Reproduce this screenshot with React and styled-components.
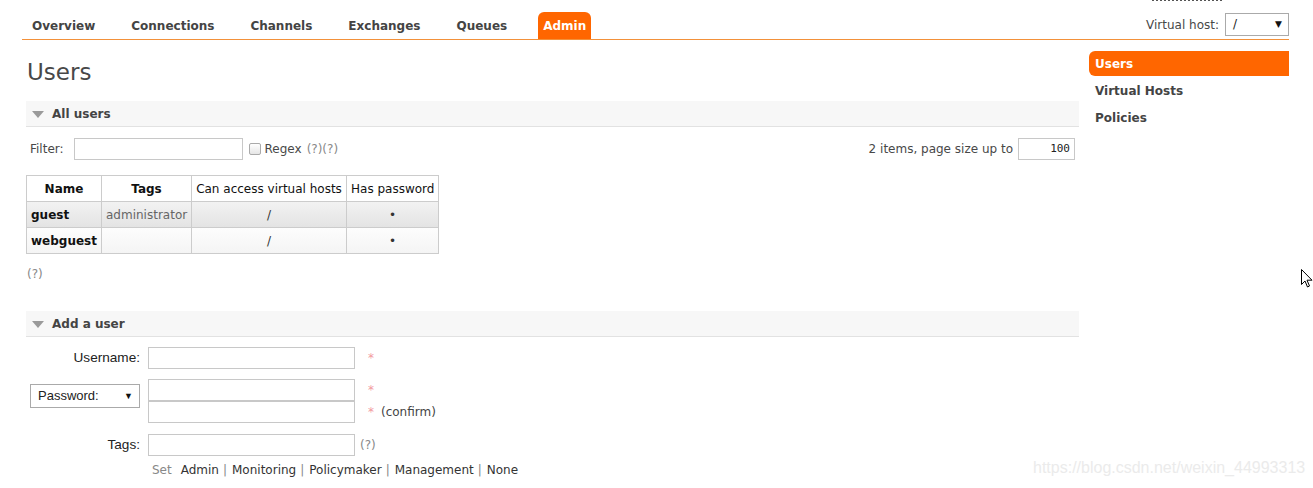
import React from "react";
import styled, { createGlobalStyle } from "styled-components";

const Global = createGlobalStyle`
  html, body { margin: 0; padding: 0; background: #fff; }
  body {
    font-family: "DejaVu Sans", Verdana, sans-serif;
    font-size: 12px;
    color: #484848;
  }
  * { box-sizing: border-box; }
`;

const Page = styled.div`
  position: relative;
  width: 1313px;
  height: 488px;
  overflow: hidden;
`;

const Header = styled.div`
  display: flex;
  justify-content: space-between;
  align-items: flex-end;
  margin: 0 24px 0 22px;
  height: 40px;
  border-bottom: 1px solid #f3913a;
`;

const Tabs = styled.ul`
  display: flex;
  gap: 26px;
  list-style: none;
  margin: 0;
  padding: 0 0 0 5px;
`;

const Tab = styled.li`
  height: 27px;
  line-height: 28px;
  padding: 0 5px;
  font-weight: bold;
  font-size: 12px;
  color: ${(p) => (p.$active ? "#fff" : "#444")};
  background: ${(p) => (p.$active ? "#ff6600" : "transparent")};
  border-radius: 6px 6px 0 0;
`;

const HeaderRight = styled.div`
  display: flex;
  flex-direction: column;
  align-items: flex-end;
  height: 40px;
`;

const CutLine = styled.div`
  height: 2px;
  width: 70px;
  margin-right: 67px;
  border-bottom: 2px dotted #555;
`;

const VhostRow = styled.div`
  display: flex;
  align-items: center;
  gap: 6px;
  margin-top: auto;
  margin-bottom: 3px;
`;

const SelectBox = styled.div`
  position: relative;
  width: ${(p) => p.$w}px;
  height: ${(p) => p.$h || 23}px;
  border: 1px solid #aaa;
  background: #fff;
  padding-left: 7px;
  line-height: ${(p) => (p.$h || 23) - 2}px;
  font-size: ${(p) => (p.$arial ? 13 : 12)}px;
  color: #222;
  font-family: ${(p) => (p.$arial ? '"Liberation Sans", Arial, sans-serif' : "inherit")};
  &::after {
    content: "▼";
    position: absolute;
    right: 6px;
    top: 0;
    font-size: 9px;
    color: #111;
  }
`;

const Body = styled.div`
  display: flex;
  gap: 10px;
  padding-left: 26px;
`;

const Main = styled.div`
  width: 1053px;
`;

const H1 = styled.h1`
  margin: 18px 0 15px 1px;
  font-size: 23px;
  font-weight: normal;
  color: #484848;
  line-height: 28px;
`;

const SectionHead = styled.div`
  display: flex;
  align-items: center;
  height: 26px;
  background: #f7f7f7;
  border-bottom: 1px solid #e2e2e2;
  padding-left: 6px;
  gap: 8px;
  font-weight: bold;
  color: #444;
`;

const Triangle = styled.span`
  width: 0;
  height: 0;
  border-left: 6px solid transparent;
  border-right: 6px solid transparent;
  border-top: 7px solid #9a9a9a;
  margin-top: 1px;
`;

const FilterRow = styled.div`
  display: flex;
  align-items: center;
  justify-content: space-between;
  margin: 11px 4px 0 4px;
  height: 22px;
`;

const FilterLeft = styled.div`
  display: flex;
  align-items: center;
`;

const TextInput = styled.div`
  width: ${(p) => p.$w}px;
  height: ${(p) => p.$h || 22}px;
  border: 1px solid #c8c8c8;
  background: #fff;
  text-align: right;
  padding-right: 4px;
  line-height: ${(p) => (p.$h || 22) - 2}px;
  font-family: "DejaVu Sans Mono", monospace;
  font-size: 11px;
  color: #222;
`;

const Check = styled.span`
  display: inline-block;
  width: 12px;
  height: 12px;
  border: 1px solid #aaa;
  border-radius: 2px;
  background: linear-gradient(#fff, #e6e6e6);
  margin: 0 4px 0 6px;
`;

const Help = styled.span`
  color: #888;
  margin-left: ${(p) => p.$ml || 0}px;
`;

const Gap = styled.span`
  display: inline-block;
  width: ${(p) => p.$w}px;
`;

const Table = styled.table`
  border-collapse: collapse;
  table-layout: fixed;
  width: 412px;
  margin-top: 15px;
  border: 1px solid #ccc;
  th, td {
    border: 1px solid #ccc;
    height: 26px;
    padding: 0 4px;
    white-space: nowrap;
    overflow: visible;
  }
  th {
    color: #111;
    background: #fff;
    text-align: center;
  }
`;

const Th = styled.th`
  font-weight: ${(p) => (p.$bold ? "bold" : "normal")};
  width: ${(p) => p.$w}px;
`;

const Tr = styled.tr`
  background: ${(p) =>
    p.$dark
      ? "linear-gradient(#f2f2f2, #e3e3e3)"
      : "linear-gradient(#fdfdfd, #f4f4f4)"};
`;

const Td = styled.td`
  text-align: ${(p) => p.$align || "center"};
  font-weight: ${(p) => (p.$bold ? "bold" : "normal")};
  color: ${(p) => (p.$bold ? "#111" : p.$muted ? "#666" : "#333")};
`;

const HelpLine = styled.div`
  margin: 13px 0 0 1px;
  color: #888;
`;

const Spacer = styled.div`
  height: ${(p) => p.$h}px;
`;

const Form = styled.div`
  display: grid;
  grid-template-columns: 110px 207px auto;
  column-gap: 8px;
  margin-top: 10px;
  margin-left: 4px;
  align-items: start;
`;

const Label = styled.div`
  text-align: right;
  height: 22px;
  line-height: 22px;
  color: #222;
  font-family: "Liberation Sans", Arial, sans-serif;
  font-size: 13.6px;
  margin-top: ${(p) => p.$mt || 0}px;
`;

const Stack = styled.div`
  display: flex;
  flex-direction: column;
  margin-top: ${(p) => p.$mt || 0}px;
`;

const Note = styled.div`
  display: flex;
  flex-direction: column;
  margin-top: ${(p) => p.$mt || 0}px;
`;

const NoteLine = styled.div`
  height: 22px;
  line-height: 22px;
  display: flex;
  gap: 7px;
  color: #444;
`;

const Star = styled.span`
  color: #f29aa0;
  padding-left: 5px;
`;

const SetLine = styled.div`
  grid-column: 2 / 4;
  margin: 7px 0 0 4px;
  color: #333;
  white-space: nowrap;
`;

const Muted = styled.span`
  color: #888;
  margin-right: 9px;
`;

const Sep = styled.span`
  color: #888;
  margin: 0 5px 0 4px;
`;

const Sidebar = styled.ul`
  list-style: none;
  margin: 11px 0 0 0;
  padding: 0;
  width: 200px;
`;

const SideItem = styled.li`
  height: 25px;
  line-height: 26px;
  margin-bottom: 2px;
  padding-left: 6px;
  font-weight: bold;
  color: ${(p) => (p.$active ? "#fff" : "#444")};
  background: ${(p) => (p.$active ? "#ff6600" : "transparent")};
  border-radius: 6px 0 0 6px;
`;

const Watermark = styled.div`
  position: absolute;
  left: 1033px;
  top: 459px;
  font-family: "Liberation Sans", Arial, sans-serif;
  font-size: 16px;
  color: #ebebeb;
`;

const Cursor = styled.svg`
  position: absolute;
  left: 1301px;
  top: 269px;
`;

export default function App() {
  return (
    <Page>
      <Global />
      <Header>
        <Tabs>
          <Tab>Overview</Tab>
          <Tab>Connections</Tab>
          <Tab>Channels</Tab>
          <Tab>Exchanges</Tab>
          <Tab>Queues</Tab>
          <Tab $active>Admin</Tab>
        </Tabs>
        <HeaderRight>
          <CutLine />
          <VhostRow>
            <span>Virtual host:</span>
            <SelectBox $w={64}>/</SelectBox>
          </VhostRow>
        </HeaderRight>
      </Header>
      <Body>
        <Main>
          <H1>Users</H1>
          <SectionHead>
            <Triangle />
            <span>All users</span>
          </SectionHead>
          <FilterRow>
            <FilterLeft>
              <span>Filter:</span>
              <Gap $w={10} />
              <TextInput $w={169} />
              <Check />
              <span>Regex</span>
              <Gap $w={5} />
              <Help>(?)(?)</Help>
            </FilterLeft>
            <FilterLeft>
              <span>2 items, page size up to</span>
              <Gap $w={5} />
              <TextInput $w={57}>100</TextInput>
            </FilterLeft>
          </FilterRow>
          <Table>
            <thead>
              <tr>
                <Th $bold $w={75}>Name</Th>
                <Th $bold $w={90}>Tags</Th>
                <Th $w={155}>Can access virtual hosts</Th>
                <Th $w={92}>Has password</Th>
              </tr>
            </thead>
            <tbody>
              <Tr $dark>
                <Td $bold $align="left">guest</Td>
                <Td $muted>administrator</Td>
                <Td>/</Td>
                <Td>•</Td>
              </Tr>
              <Tr>
                <Td $bold $align="left">webguest</Td>
                <Td></Td>
                <Td>/</Td>
                <Td>•</Td>
              </Tr>
            </tbody>
          </Table>
          <HelpLine>(?)</HelpLine>
          <Spacer $h={30} />
          <SectionHead>
            <Triangle />
            <span>Add a user</span>
          </SectionHead>
          <Form>
            <Label>Username:</Label>
            <TextInput $w={207} />
            <Note>
              <NoteLine>
                <Star>*</Star>
              </NoteLine>
            </Note>

            <Stack $mt={15}>
              <SelectBox $w={110} $h={24} $arial>
                Password:
              </SelectBox>
            </Stack>
            <Stack $mt={10}>
              <TextInput $w={207} />
              <TextInput $w={207} />
            </Stack>
            <Note $mt={10}>
              <NoteLine>
                <Star>*</Star>
              </NoteLine>
              <NoteLine>
                <Star>*</Star>
                <span>(confirm)</span>
              </NoteLine>
            </Note>

            <Label $mt={11}>Tags:</Label>
            <Stack $mt={11}>
              <TextInput $w={207} />
            </Stack>
            <Note $mt={11}>
              <NoteLine>
                <Help $ml={-3}>(?)</Help>
              </NoteLine>
            </Note>
            <div />
            <SetLine>
              <Muted>Set</Muted>Admin<Sep>|</Sep>Monitoring<Sep>|</Sep>Policymaker
              <Sep>|</Sep>Management<Sep>|</Sep>None
            </SetLine>
          </Form>
        </Main>
        <Sidebar>
          <SideItem $active>Users</SideItem>
          <SideItem>Virtual Hosts</SideItem>
          <SideItem>Policies</SideItem>
        </Sidebar>
      </Body>
      <Watermark>https://blog.csdn.net/weixin_44993313</Watermark>
      <Cursor width="12" height="20" viewBox="0 0 12 20">
        <path
          d="M0.5 0.5 L0.5 15.5 L4 12 L6.5 18 L8.5 17 L6 11.2 L11 11.2 Z"
          fill="#fff"
          stroke="#000"
          strokeWidth="1"
        />
      </Cursor>
    </Page>
  );
}
